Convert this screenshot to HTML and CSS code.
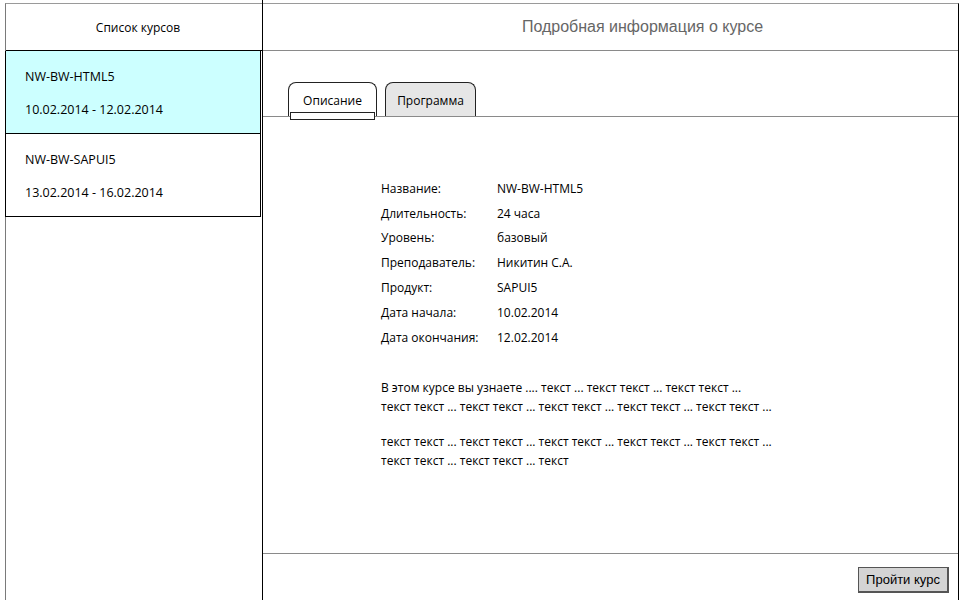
FILE: index.html
```html
<!DOCTYPE html>
<html lang="ru">
<head>
<meta charset="utf-8">
<title>Курсы</title>
<link rel="stylesheet" href="styles.css">
</head>
<body>
<div class="app">
  <aside class="left">
    <div class="left-head">Список курсов</div>
    <div class="item item-active">
      <div class="item-line">NW-BW-HTML5</div>
      <div class="item-line">10.02.2014 - 12.02.2014</div>
    </div>
    <div class="item">
      <div class="item-line">NW-BW-SAPUI5</div>
      <div class="item-line">13.02.2014 - 16.02.2014</div>
    </div>
  </aside>
  <main class="right">
    <div class="right-inner">
      <header class="right-head">Подробная информация о курсе</header>
      <nav class="tabs">
        <div class="tab tab-active">Описание</div>
        <div class="tab">Программа</div>
      </nav>
      <section class="content">
        <div class="fields">
          <div class="row"><span class="lbl">Название:</span><span class="val">NW-BW-HTML5</span></div>
          <div class="row"><span class="lbl">Длительность:</span><span class="val">24 часа</span></div>
          <div class="row"><span class="lbl">Уровень:</span><span class="val">базовый</span></div>
          <div class="row"><span class="lbl">Преподаватель:</span><span class="val">Никитин С.А.</span></div>
          <div class="row"><span class="lbl">Продукт:</span><span class="val">SAPUI5</span></div>
          <div class="row"><span class="lbl">Дата начала:</span><span class="val">10.02.2014</span></div>
          <div class="row"><span class="lbl">Дата окончания:</span><span class="val">12.02.2014</span></div>
        </div>
        <p class="para">В этом курсе вы узнаете .... текст ... текст текст ... текст текст ...<br>текст текст ... текст текст ... текст текст ... текст текст ... текст текст ...</p>
        <p class="para">текст текст ... текст текст ... текст текст ... текст текст ... текст текст ...<br>текст текст ... текст текст ... текст</p>
      </section>
      <footer class="footer">
        <button class="btn" type="button">Пройти курс</button>
      </footer>
    </div>
  </main>
</div>
</body>
</html>
```
FILE: styles.css
```css
* { box-sizing: border-box; }

html, body {
  margin: 0;
  padding: 0;
  width: 960px;
  height: 600px;
  overflow: hidden;
  background: #fff;
}

body {
  font-family: "Open Sans", "DejaVu Sans", sans-serif;
  font-size: 12px;
  color: #000;
}

.app {
  display: flex;
  height: 600px;
  padding-left: 5px;
}

/* left column */
.left {
  width: 257px;
  margin-top: 3px;
  border-top: 1px solid #9a9a9a;
  border-left: 1px solid #7a7a7a;
  display: flex;
  flex-direction: column;
}

.left-head {
  height: 47px;
  border-bottom: 1px solid #000;
  display: flex;
  align-items: center;
  justify-content: center;
  padding-left: 8px;
  font-size: 12px;
}

.item {
  width: 256px;
  margin-left: -1px;
  border-left: 1px solid #000;
  border-right: 1px solid #000;
  border-bottom: 1px solid #000;
  padding: 18px 0 15px 19px;
  display: flex;
  flex-direction: column;
  gap: 17px;
}

.item-active { background: #ccffff; }

.item-line {
  line-height: 16px;
  font-size: 12.5px;
}

/* right column */
.right {
  flex: 1;
  border-left: 1px solid #000;
  display: flex;
}

.right-inner {
  flex: 1;
  margin-top: 3px;
  margin-right: 1px;
  border-top: 1px solid #9a9a9a;
  border-right: 1px solid #000;
  display: flex;
  flex-direction: column;
}

.right-head {
  height: 47px;
  border-bottom: 1px solid #8a8a8a;
  display: flex;
  align-items: center;
  justify-content: center;
  padding-left: 64px;
  padding-bottom: 1px;
  font-family: "Liberation Sans", Arial, sans-serif;
  font-size: 16px;
  color: #666;
}

.tabs {
  height: 65px;
  display: flex;
  align-items: flex-end;
  gap: 8px;
  padding-left: 25px;
}

.tab {
  position: relative;
  height: 34px;
  padding: 2px 12px 0;
  border: 1px solid #222;
  border-bottom: none;
  border-radius: 8px 8px 0 0;
  background: #e6e6e6;
  display: flex;
  align-items: center;
  justify-content: center;
  font-size: 12px;
}

.tab-active {
  width: 89px;
  background: #fff;
  z-index: 1;
}

.tab:not(.tab-active) { width: 91px; }

.tab-active::after {
  content: "";
  position: absolute;
  left: 1px;
  right: 1px;
  bottom: -4px;
  height: 6px;
  background: #fff;
  border: 1px solid #222;
}

.content {
  flex: 1;
  border-top: 1px solid #8a8a8a;
  border-bottom: 1px solid #8a8a8a;
  padding: 59px 0 0 118px;
}

.fields {
  display: flex;
  flex-direction: column;
}

.row {
  display: flex;
  height: 24.8px;
  align-items: center;
}

.lbl { width: 116px; }

.para {
  margin: 0;
  line-height: 19px;
  white-space: nowrap;
}

.fields + .para { margin-top: 28px; }
.para + .para { margin-top: 16px; }

.footer {
  height: 46px;
  display: flex;
  justify-content: flex-end;
  align-items: flex-start;
  padding: 13px 9px 0 0;
}

.btn {
  width: 91px;
  height: 26px;
  margin: 0;
  padding: 0;
  background: #d4d4d4;
  border: 1px solid #555;
  border-right-width: 2px;
  border-bottom-width: 2px;
  font-family: "Liberation Sans", Arial, sans-serif;
  font-size: 13px;
  color: #000;
}
```
